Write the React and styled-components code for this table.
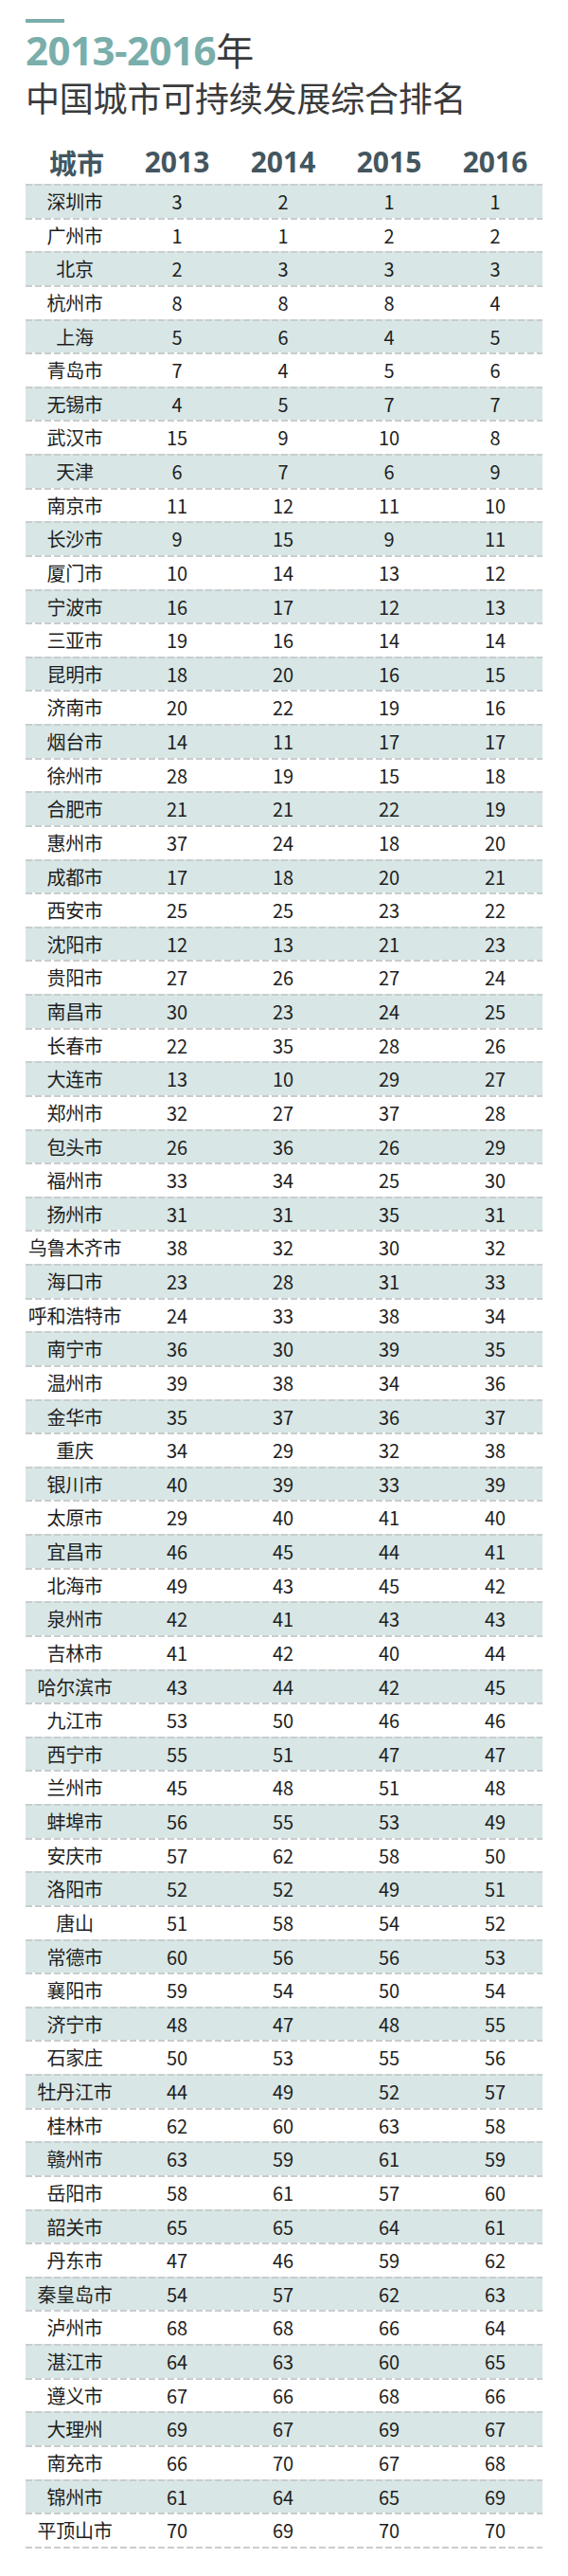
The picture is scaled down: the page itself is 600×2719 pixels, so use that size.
import React from 'react'
import styled, { createGlobalStyle } from 'styled-components'

const rows = [
    ['深圳市', 3, 2, 1, 1],
    ['广州市', 1, 1, 2, 2],
    ['北京', 2, 3, 3, 3],
    ['杭州市', 8, 8, 8, 4],
    ['上海', 5, 6, 4, 5],
    ['青岛市', 7, 4, 5, 6],
    ['无锡市', 4, 5, 7, 7],
    ['武汉市', 15, 9, 10, 8],
    ['天津', 6, 7, 6, 9],
    ['南京市', 11, 12, 11, 10],
    ['长沙市', 9, 15, 9, 11],
    ['厦门市', 10, 14, 13, 12],
    ['宁波市', 16, 17, 12, 13],
    ['三亚市', 19, 16, 14, 14],
    ['昆明市', 18, 20, 16, 15],
    ['济南市', 20, 22, 19, 16],
    ['烟台市', 14, 11, 17, 17],
    ['徐州市', 28, 19, 15, 18],
    ['合肥市', 21, 21, 22, 19],
    ['惠州市', 37, 24, 18, 20],
    ['成都市', 17, 18, 20, 21],
    ['西安市', 25, 25, 23, 22],
    ['沈阳市', 12, 13, 21, 23],
    ['贵阳市', 27, 26, 27, 24],
    ['南昌市', 30, 23, 24, 25],
    ['长春市', 22, 35, 28, 26],
    ['大连市', 13, 10, 29, 27],
    ['郑州市', 32, 27, 37, 28],
    ['包头市', 26, 36, 26, 29],
    ['福州市', 33, 34, 25, 30],
    ['扬州市', 31, 31, 35, 31],
    ['乌鲁木齐市', 38, 32, 30, 32],
    ['海口市', 23, 28, 31, 33],
    ['呼和浩特市', 24, 33, 38, 34],
    ['南宁市', 36, 30, 39, 35],
    ['温州市', 39, 38, 34, 36],
    ['金华市', 35, 37, 36, 37],
    ['重庆', 34, 29, 32, 38],
    ['银川市', 40, 39, 33, 39],
    ['太原市', 29, 40, 41, 40],
    ['宜昌市', 46, 45, 44, 41],
    ['北海市', 49, 43, 45, 42],
    ['泉州市', 42, 41, 43, 43],
    ['吉林市', 41, 42, 40, 44],
    ['哈尔滨市', 43, 44, 42, 45],
    ['九江市', 53, 50, 46, 46],
    ['西宁市', 55, 51, 47, 47],
    ['兰州市', 45, 48, 51, 48],
    ['蚌埠市', 56, 55, 53, 49],
    ['安庆市', 57, 62, 58, 50],
    ['洛阳市', 52, 52, 49, 51],
    ['唐山', 51, 58, 54, 52],
    ['常德市', 60, 56, 56, 53],
    ['襄阳市', 59, 54, 50, 54],
    ['济宁市', 48, 47, 48, 55],
    ['石家庄', 50, 53, 55, 56],
    ['牡丹江市', 44, 49, 52, 57],
    ['桂林市', 62, 60, 63, 58],
    ['赣州市', 63, 59, 61, 59],
    ['岳阳市', 58, 61, 57, 60],
    ['韶关市', 65, 65, 64, 61],
    ['丹东市', 47, 46, 59, 62],
    ['秦皇岛市', 54, 57, 62, 63],
    ['泸州市', 68, 68, 66, 64],
    ['湛江市', 64, 63, 60, 65],
    ['遵义市', 67, 66, 68, 66],
    ['大理州', 69, 67, 69, 67],
    ['南充市', 66, 70, 67, 68],
    ['锦州市', 61, 64, 65, 69],
    ['平顶山市', 70, 69, 70, 70],
]

const teal = '#79aeab'
const dash = 'repeating-linear-gradient(90deg, #c9cdcd 0 7px, transparent 7px 10px)'

const GlobalStyle = createGlobalStyle`
    html, body {
        margin: 0;
        background: #fff;
    }
    body {
        font-family: "Noto Sans CJK SC", "Noto Sans", sans-serif;
        color: #1e1e1e;
    }
`

const Page = styled.div`
    width: 600px;
    height: 2719px;
    box-sizing: border-box;
    padding: 20px 27px 0;
`

const Accent = styled.div`
    width: 41px;
    height: 4px;
    background: ${teal};
`

const Title = styled.h1`
    margin: 4px 0 0;
    font-weight: 400;
    line-height: 48px;
    white-space: nowrap;
`

const Years = styled.span`
    font-family: "Open Sans", "Noto Sans", sans-serif;
    font-weight: 700;
    font-size: 42px;
    letter-spacing: -0.5px;
    color: ${teal};
`

const Nian = styled.span`
    font-family: "Noto Sans CJK SC", sans-serif;
    font-size: 40px;
    color: #3a3a3a;
`

const Subtitle = styled.h2`
    margin: 0;
    font-size: 36px;
    font-weight: 400;
    line-height: 46px;
    color: #3a3a3a;
    letter-spacing: -0.2px;
`

const Table = styled.div`
    margin-top: 22px;
    width: 546px;
`

const Grid = styled.div`
    display: grid;
    grid-template-columns: 104px 112px 112px 112px 1fr;
    align-items: center;
`

const HeadRow = styled(Grid)`
    height: 47px;
`

const HeadCell = styled.div`
    text-align: center;
    font-family: "Open Sans", "Noto Sans CJK SC", sans-serif;
    font-weight: 700;
    font-size: 30px;
    color: #435660;
    &:first-child {
        font-family: "Noto Sans CJK SC", sans-serif;
        font-size: 29px;
        padding-left: 4px;
    }
    &:last-child {
        padding-left: 6px;
    }
`

const Row = styled(Grid)`
    height: 35.64px;
    background: ${dash} top left / 100% 2px no-repeat,
        ${props => (props.$band ? '#d8e6e6' : '#fff')};
`

const Cell = styled.div`
    text-align: center;
    font-size: 20px;
    line-height: 35px;
    padding-top: 1px;
    &:first-child {
        letter-spacing: -0.3px;
    }
    &:last-child {
        padding-left: 6px;
    }
`

const TableEnd = styled.div`
    height: 2px;
    background: ${dash};
`

export default function App() {
    return <Page>
        <GlobalStyle />
        <Accent />
        <Title>
            <Years>2013-2016</Years><Nian>年</Nian>
        </Title>
        <Subtitle>中国城市可持续发展综合排名</Subtitle>
        <Table>
            <HeadRow>
                <HeadCell>城市</HeadCell>
                <HeadCell>2013</HeadCell>
                <HeadCell>2014</HeadCell>
                <HeadCell>2015</HeadCell>
                <HeadCell>2016</HeadCell>
            </HeadRow>
            {rows.map((row, i) =>
                <Row key={row[0]} $band={i % 2 === 0}>
                    {row.map((value, j) => <Cell key={j}>{value}</Cell>)}
                </Row>
            )}
            <TableEnd />
        </Table>
    </Page>
}
